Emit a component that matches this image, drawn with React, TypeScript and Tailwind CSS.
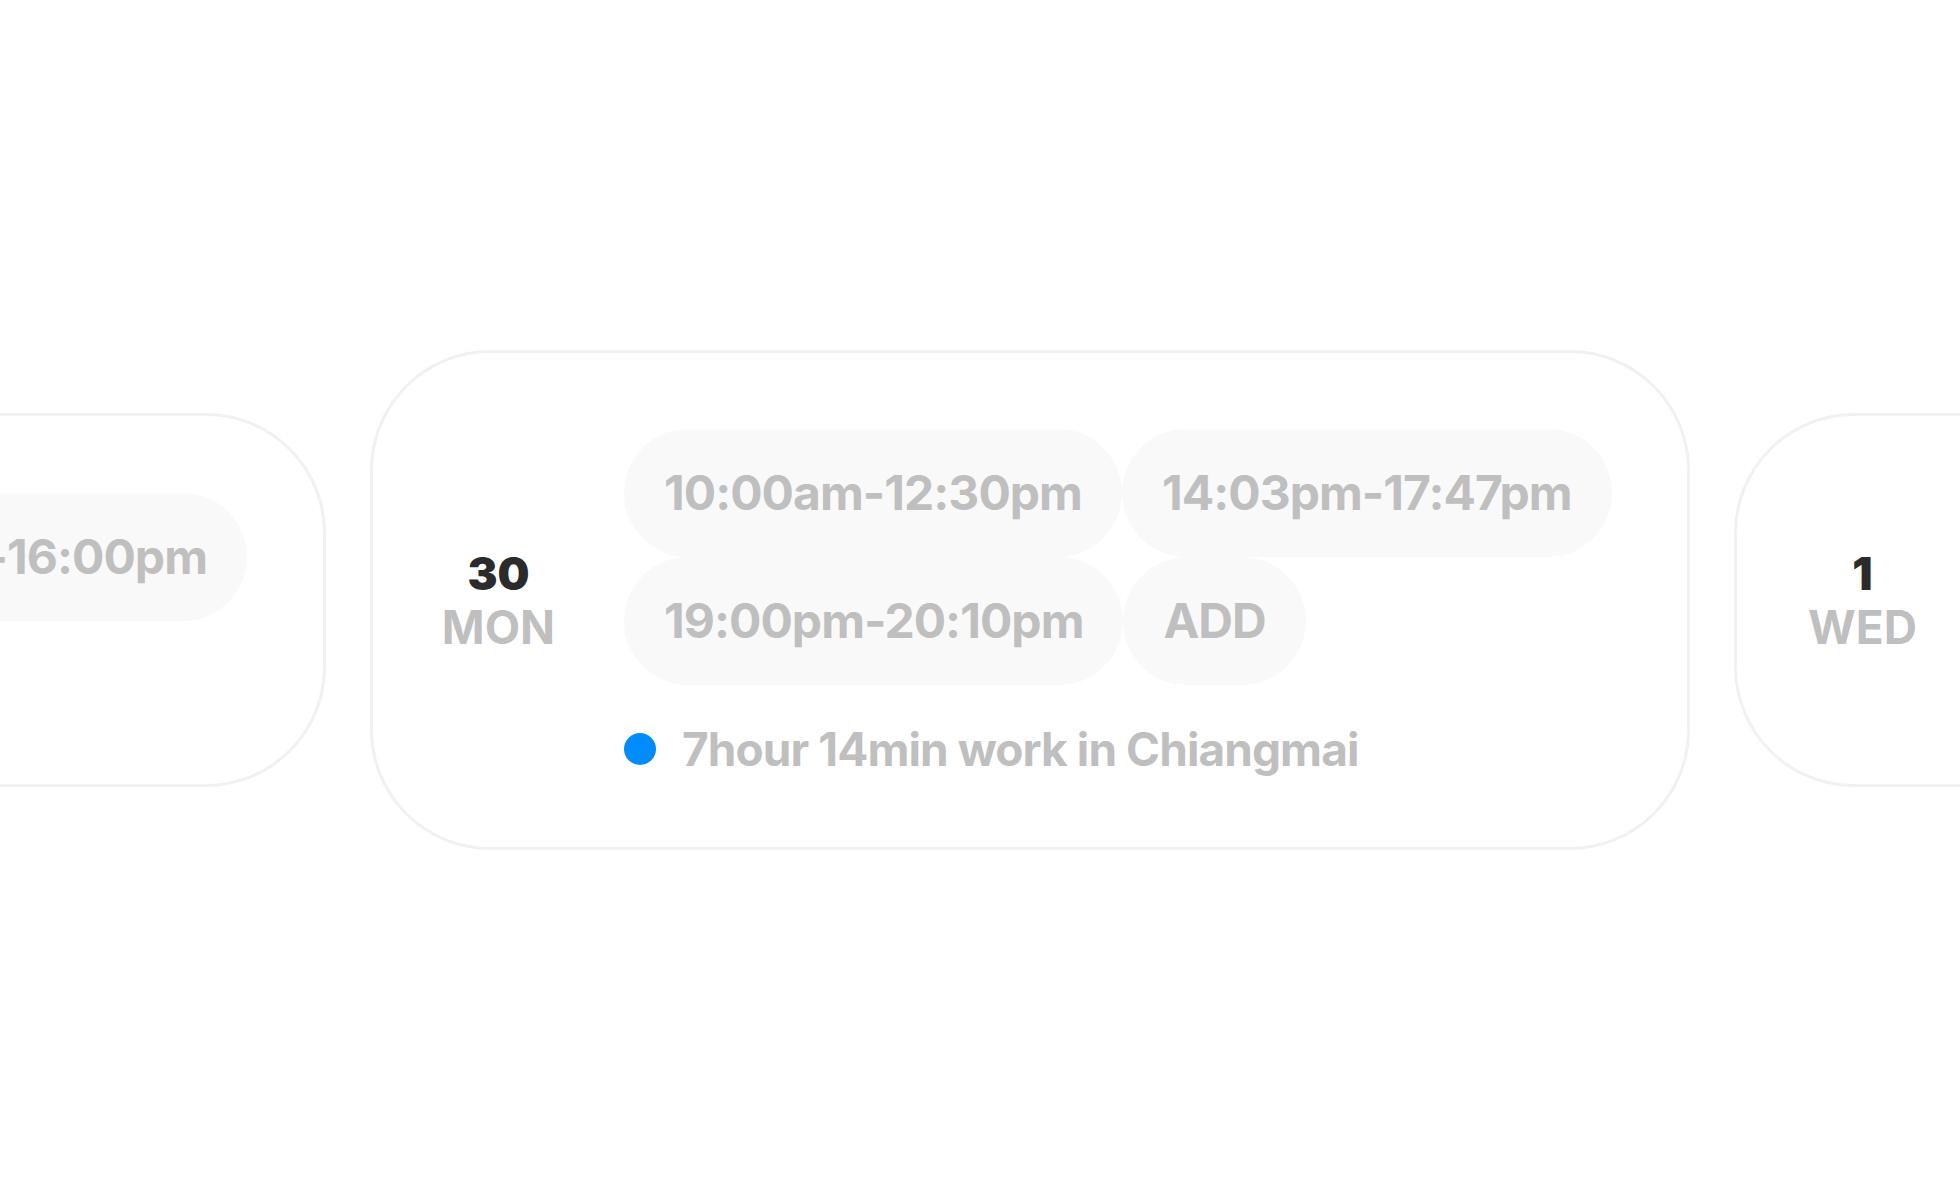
import React from 'react';

type Day = {
  date: string;
  weekday: string;
  slots: string[];
  summary?: string;
};

const days: Day[] = [
  {
    date: '29',
    weekday: 'SUN',
    slots: ['09:00am-11:30am', '13:00pm-16:00pm'],
    summary: '5hour 30min work in Bangkok',
  },
  {
    date: '30',
    weekday: 'MON',
    slots: ['10:00am-12:30pm', '14:03pm-17:47pm', '19:00pm-20:10pm'],
    summary: '7hour 14min work in Chiangmai',
  },
  {
    date: '1',
    weekday: 'WED',
    slots: ['09:30am-12:00pm'],
    summary: '2hour 30min work in Phuket',
  },
];

function Slot({ label }: { label: string }) {
  return (
    <div className="h-[128px] px-10 flex items-center rounded-full bg-[#f9f9f9] text-[48px] font-bold tracking-[-0.02em] text-[#bfbfbf] whitespace-nowrap">
      {label}
    </div>
  );
}

function DayCard({ day, active }: { day: Day; active?: boolean }) {
  return (
    <div
      className={
        active
          ? 'shrink-0 w-[1320px] h-[500px] flex items-center rounded-[120px] border-[3px] border-[#f1f1f1] bg-white'
          : 'shrink-0 h-[374px] flex items-center rounded-[120px] border-[3px] border-[#f1f1f1] bg-white'
      }
    >
      <div className="w-[251px] shrink-0 flex flex-col items-center gap-2 leading-none">
        <span className="text-[45px] font-black text-[#2b2b2b]">{day.date}</span>
        <span className="text-[46px] font-bold text-[#bfbfbf]">{day.weekday}</span>
      </div>
      <div className={active ? 'flex-1 flex flex-col pt-[6px] pr-[50px]' : 'flex flex-col pt-[6px] pr-[76px]'}>
        <div className="flex flex-wrap">
          {day.slots.map((s) => (
            <Slot key={s} label={s} />
          ))}
          {active && <Slot label="ADD" />}
        </div>
        {day.summary && (
          <div className="mt-[36px] h-[56px] flex items-center gap-[26px] whitespace-nowrap">
            <span className="w-[32px] h-[32px] rounded-full bg-[#008cff] shrink-0" />
            <span className="text-[46px] font-bold tracking-[-0.02em] text-[#bfbfbf]">{day.summary}</span>
          </div>
        )}
      </div>
    </div>
  );
}

export default function App() {
  return (
    <div
      className="w-full h-screen overflow-hidden bg-white flex items-center"
      style={{ fontFamily: 'Inter, "Noto Sans", sans-serif' }}
    >
      <div className="flex items-center gap-11">
        <div className="w-[326px] shrink-0 flex justify-end">
          <DayCard day={days[0]} />
        </div>
        <DayCard day={days[1]} active />
        <DayCard day={days[2]} />
      </div>
    </div>
  );
}
